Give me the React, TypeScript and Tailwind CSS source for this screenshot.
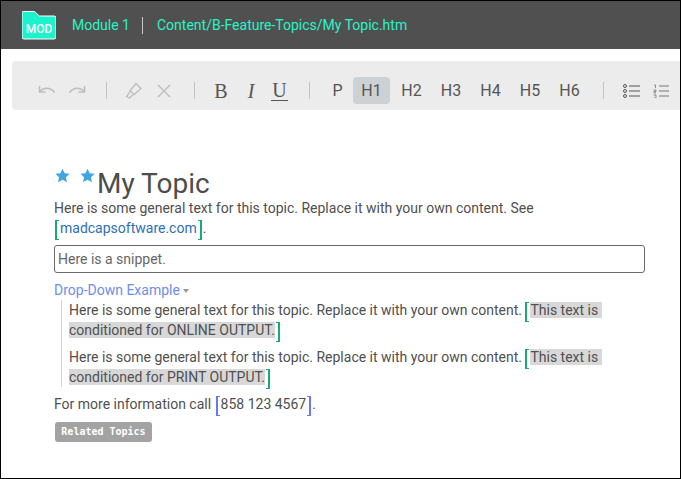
import React from "react";

const Sep = () => <div className="w-px h-[17px] bg-[#c4c4c4]" />;

const Star = () => (
  <svg width="15" height="15" viewBox="0 0 24 24" className="shrink-0">
    <path fill="#42a5e0" d="M12 1l3.400 7.400 8 .9-5.900 5.500 1.600 8L12 18.800 4.900 22.800l1.600-8L.6 9.300l8-.9z" />
  </svg>
);

const Bracket = ({ color, side, roomy }: { color: string; side: "l" | "r"; roomy?: boolean }) => (
  <span
    className={`inline-block align-[-3px] w-[4px] h-[20px] my-[-4px] border-y ${side === "l" ? "border-l-2 mr-px" : "border-r-2 ml-px"} ${side === "l" && roomy ? "ml-px" : ""} ${side === "r" && roomy ? "mr-px" : ""}`}
    style={{ borderColor: color }}
  />
);

const UndoIcon = ({ flip }: { flip?: boolean }) => (
  <svg width="18" height="12" viewBox="0 0 18 12" fill="none" stroke="#bdbdbd" strokeWidth="1.500" className={flip ? "-scale-x-100" : ""}>
    <path d="M1.500 1v6h6" />
    <path d="M2 6.500C5 2.500 12 1.500 16.500 7.500" />
  </svg>
);

const Heading = ({ label, active }: { label: string; active?: boolean }) => (
  <div className={`w-[37px] h-[27px] flex items-center justify-center rounded-sm text-base text-[#555555] ${active ? "bg-[#ced1d4]" : ""}`}>
    {label}
  </div>
);

const Shaded = ({ children }: { children: React.ReactNode }) => <span className="bg-[#d8d8d8]">{children}</span>;

export default function App() {
  return (
    <div className="w-[681px] h-[479px] border border-black bg-white overflow-hidden flex flex-col text-sm text-[#505050] font-['Roboto',sans-serif]">
      {/* top bar */}
      <div className="h-[48px] shrink-0 bg-[#505050] flex items-center pl-[21px] text-[#27f5c8]">
        <svg width="34" height="29" viewBox="0 0 34 29" className="shrink-0 mt-[1px]">
          <path fill="#1cf2cc" stroke="#ffffff" strokeWidth="1" d="M1.500.5h11l5 4.500h14.500q2 0 2 2v19q0 2-2 2h-30q-2 0-2-2v-24.500q0-1 1-1z" />
          <text x="17" y="21.500" textAnchor="middle" fill="#ffffff" fontSize="12" fontWeight="500" fontFamily="Roboto, sans-serif">MOD</text>
        </svg>
        <span className="ml-[16px]">Module 1</span>
        <div className="w-px h-[17px] bg-[#c8c8c8] ml-[12px] mr-[14px]" />
        <span>Content/B-Feature-Topics/My Topic.htm</span>
      </div>

      {/* toolbar */}
      <div className="h-[49px] mt-[12px] ml-[11px] pt-[10px] shrink-0 bg-[#ececec] rounded-l-sm flex items-center pl-[26px]">
        <UndoIcon />
        <div className="ml-[12px]"><UndoIcon flip /></div>
        <div className="ml-[20px]"><Sep /></div>
        <svg width="18" height="18" viewBox="0 0 18 18" fill="none" stroke="#bdbdbd" strokeWidth="1.300" className="ml-[18px]">
          <path d="M11 1.500l5 5-7 6-4-4z" />
          <path d="M5 8.500l-1 3-2.500 3 3 1.500 2-2 2.500-1.500" />
        </svg>
        <svg width="14" height="14" viewBox="0 0 14 14" stroke="#bdbdbd" strokeWidth="1.400" className="ml-[14px]">
          <path d="M1 1l12 12M13 1L1 13" />
        </svg>
        <div className="ml-[23px]"><Sep /></div>
        <div className="ml-[18px] w-[16px] text-center text-[20px] text-[#555555] font-['Liberation_Serif',serif] leading-none">B</div>
        <div className="ml-[14px] w-[16px] text-center text-[20px] italic text-[#555555] font-['Liberation_Serif',serif] leading-none">I</div>
        <div className="ml-[12px] w-[17px] text-center text-[20px] text-[#555555] font-['Liberation_Serif',serif] leading-none border-b border-[#555555]">U</div>
        <div className="ml-[21px]"><Sep /></div>
        <div className="w-[37px] ml-[9px] mr-[-3px]"><Heading label="P" /></div>
        <Heading label="H1" active />
        <div className="ml-[3px] flex gap-[2.500px]">
          <Heading label="H2" />
          <Heading label="H3" />
          <Heading label="H4" />
          <Heading label="H5" />
          <Heading label="H6" />
        </div>
        <div className="ml-[15px]"><Sep /></div>
        <svg width="17" height="14" viewBox="0 0 17 14" fill="none" stroke="#555555" className="ml-[19px]">
          <circle cx="2" cy="2" r="1.500" /><circle cx="2" cy="7" r="1.500" /><circle cx="2" cy="12" r="1.500" />
          <path d="M6 2h11M6 7h11M6 12h11" />
        </svg>
        <svg width="16" height="14" viewBox="0 0 16 14" fill="none" stroke="#777777" className="ml-[13px]">
          <path d="M6 2h10M6 7h10M6 12h10" />
          <path d="M1 1h1.500v3M.5 6h2.500v1.500H1V9h2M.5 11h2.500v3H.5" strokeWidth="0.800" />
        </svg>
      </div>

      {/* topic body */}
      <div className="pl-[53px] pr-[35px] pt-[57px] leading-[20px]">
        <div className="flex items-start gap-[10px] h-[27px] pl-[1px] pt-[1px]">
          <Star />
          <Star />
          <div className="text-[28px] leading-[30px] ml-[-8px] mt-[1px] text-[#4d4d4d] whitespace-nowrap">My Topic</div>
        </div>
        <p className="mt-[4px]">
          Here is some general text for this topic. Replace it with your own content. See
          <br />
          <Bracket color="#19a974" side="l" roomy />
          <span className="text-[#2f6fb5]">madcapsoftware.com</span>
          <Bracket color="#19a974" side="r" roomy />.
        </p>
        <div className="mt-[7px] h-[28px] border border-[#6a6a6a] rounded-[3px] flex items-center pl-[3px] text-[#666666]">
          Here is a snippet.
        </div>
        <div className="mt-[7px] text-[#6e8ee8] flex items-center">
          Drop-Down Example
          <span className="ml-[3px] mt-[1px] w-0 h-0 border-x-[3px] border-x-transparent border-t-[4px] border-t-[#999999]" />
        </div>
        <div className="ml-[7px] pl-[7px] border-l border-[#d4d4d4] flex flex-col gap-[7px]">
          <p>
            Here is some general text for this topic. Replace it with your own content.{" "}
            <Bracket color="#19a974" side="l" />
            <Shaded>This text is&nbsp;</Shaded>
            <br />
            <Shaded>conditioned for ONLINE OUTPUT.</Shaded>
            <Bracket color="#19a974" side="r" />
          </p>
          <p>
            Here is some general text for this topic. Replace it with your own content.{" "}
            <Bracket color="#19a974" side="l" />
            <Shaded>This text is&nbsp;</Shaded>
            <br />
            <Shaded>conditioned for PRINT OUTPUT.</Shaded>
            <Bracket color="#19a974" side="r" />
          </p>
        </div>
        <p className="mt-[7px]">
          For more information call <Bracket color="#6a78f0" side="l" roomy />858 123 4567<Bracket color="#6a78f0" side="r" roomy />.
        </p>
        <div className="mt-[8px] ml-[1px] w-[97px] h-[20px] rounded-[3px] bg-[#a3a3a3] flex items-center justify-center text-white text-[10px] font-bold font-['DejaVu_Sans_Mono',monospace]">
          Related Topics
        </div>
      </div>
    </div>
  );
}
